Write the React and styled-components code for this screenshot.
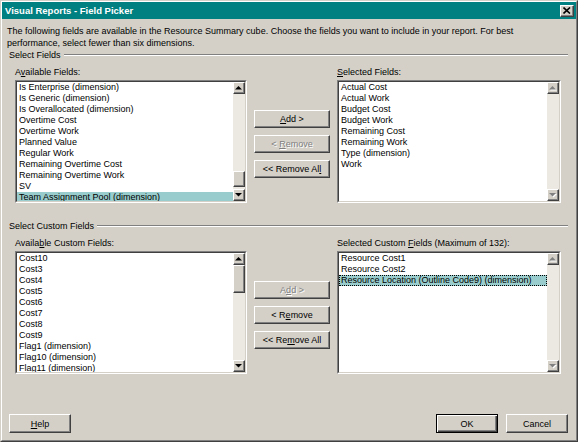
import React from 'react';
import styled, { createGlobalStyle, css } from 'styled-components';

const GlobalStyle = createGlobalStyle`
  html, body { margin: 0; padding: 0; background: #d4d0c8; }
  body {
    font-family: "Liberation Sans", Arial, sans-serif;
    font-size: 9px;
    color: #000;
  }
`;

const available = [
  'Is Enterprise (dimension)',
  'Is Generic (dimension)',
  'Is Overallocated (dimension)',
  'Overtime Cost',
  'Overtime Work',
  'Planned Value',
  'Regular Work',
  'Remaining Overtime Cost',
  'Remaining Overtime Work',
  'SV',
  'Team Assignment Pool (dimension)',
];

const selected = [
  'Actual Cost',
  'Actual Work',
  'Budget Cost',
  'Budget Work',
  'Remaining Cost',
  'Remaining Work',
  'Type (dimension)',
  'Work',
];

const customAvailable = [
  'Cost10', 'Cost3', 'Cost4', 'Cost5', 'Cost6', 'Cost7', 'Cost8', 'Cost9',
  'Flag1 (dimension)', 'Flag10 (dimension)', 'Flag11 (dimension)',
];

const customSelected = [
  'Resource Cost1',
  'Resource Cost2',
  'Resource Location (Outline Code9) (dimension)',
];

// underline the access key at position idx
const hotkey = (text, idx) => (
  <>
    {text.slice(0, idx)}
    <Key>{text[idx]}</Key>
    {text.slice(idx + 1)}
  </>
);

const Arrow = ({ dir, disabled }) => {
  const pts = dir === 'up' ? '0,3.5 3.5,0 7,3.5' : '0,0 3.5,3.5 7,0';
  return (
    <svg width="8" height="5" viewBox="0 0 8 5">
      {disabled && <polygon points={pts} fill="#fff" transform="translate(1,1)" />}
      <polygon points={pts} fill={disabled ? '#808080' : '#000'} />
    </svg>
  );
};

const ListBox = ({ items, selectedIndex, focused, thumb, disabledScroll }) => (
  <ListOuter>
    <ListInner>
      <Items>
        {items.map((it, i) => (
          <Item key={it} $selected={i === selectedIndex} $focused={focused && i === selectedIndex}>
            {it}
          </Item>
        ))}
      </Items>
      <Scrollbar>
        <ScrollButton><Arrow dir="up" disabled={disabledScroll} /></ScrollButton>
        <Track>
          {thumb && <Thumb $offset={thumb.offset} $size={thumb.size} />}
        </Track>
        <ScrollButton><Arrow dir="down" disabled={disabledScroll} /></ScrollButton>
      </Scrollbar>
    </ListInner>
  </ListOuter>
);

const App = () => (
  <>
    <GlobalStyle />
    <Window>
      <Frame>
        <TitleBar>
          <span>Visual Reports - Field Picker</span>
          <CloseBox>
            <svg width="8" height="7" viewBox="0 0 8 7">
              <path d="M0.5 0.5 L7 6.5 M7 0.5 L0.5 6.5" stroke="#000" strokeWidth="1.6" />
            </svg>
          </CloseBox>
        </TitleBar>

        <Body>
          <Description>
            The following fields are available in the Resource Summary cube. Choose the fields you want to include in your report. For best
            performance, select fewer than six dimensions.
          </Description>

          <GroupHeader>
            <span>Select Fields</span>
            <Etch />
          </GroupHeader>
          <Pane>
            <Label>{hotkey('Available Fields:', 1)}</Label>
            <Label $col={3}>{hotkey('Selected Fields:', 0)}</Label>
            <ListBox
              items={available}
              selectedIndex={10}
              thumb={{ offset: 77, size: 16 }}
            />
            <ButtonColumn>
              <Button>{hotkey('Add >', 0)}</Button>
              <Button disabled>{hotkey('< Remove', 2)}</Button>
              <Button>{hotkey('<< Remove All', 12)}</Button>
            </ButtonColumn>
            <ListBox items={selected} selectedIndex={-1} disabledScroll />
          </Pane>

          <GroupHeader $spaced>
            <span>Select Custom Fields</span>
            <Etch />
          </GroupHeader>
          <Pane>
            <Label>{hotkey('Available Custom Fields:', 6)}</Label>
            <Label $col={3}>{hotkey('Selected Custom Fields (Maximum of 132):', 16)}</Label>
            <ListBox
              items={customAvailable}
              selectedIndex={-1}
              thumb={{ offset: 0, size: 28 }}
            />
            <ButtonColumn>
              <Button disabled>{hotkey('Add >', 1)}</Button>
              <Button>{hotkey('< Remove', 3)}</Button>
              <Button>{hotkey('<< Remove All', 5)}</Button>
            </ButtonColumn>
            <ListBox items={customSelected} selectedIndex={2} focused disabledScroll />
          </Pane>

          <Footer>
            <Button $wide>{hotkey('Help', 0)}</Button>
            <FooterRight>
              <Button $wide $default>OK</Button>
              <Button $wide>Cancel</Button>
            </FooterRight>
          </Footer>
        </Body>
      </Frame>
    </Window>
  </>
);

const raised = css`
  box-sizing: border-box;
  background: #d4d0c8;
  border: 1px solid;
  border-color: #fff #404040 #404040 #fff;
  box-shadow: inset -1px -1px #808080;
`;

const Window = styled.div`
  box-sizing: border-box;
  width: 578px;
  height: 442px;
  display: flex;
  background: #d4d0c8;
  border: 1px solid;
  border-color: #d4d0c8 #404040 #404040 #d4d0c8;
`;

const Frame = styled.div`
  flex: 1;
  min-width: 0;
  display: flex;
  flex-direction: column;
  border: 1px solid;
  border-color: #fff #808080 #808080 #fff;
`;

const TitleBar = styled.div`
  height: 17px;
  background: #008080;
  color: #fff;
  font-weight: bold;
  font-size: 9.5px;
  display: flex;
  align-items: center;
  justify-content: space-between;
  padding: 0 2px 0 3px;
`;

const CloseBox = styled.div`
  ${raised};
  width: 14px;
  height: 12px;
  display: flex;
  align-items: center;
  justify-content: center;
`;

const Body = styled.div`
  flex: 1;
  display: flex;
  flex-direction: column;
  padding: 6px 8px 7px 5px;
`;

const Description = styled.p`
  margin: 0;
  line-height: 12px;
`;

const GroupHeader = styled.div`
  display: flex;
  align-items: center;
  height: 12px;
  padding-left: 2px;
  margin-top: ${(p) => (p.$spaced ? '17px' : '0')};
`;

const Etch = styled.div`
  flex: 1;
  margin-left: 3px;
  border-top: 1px solid #808080;
  border-bottom: 1px solid #fff;
`;

const Pane = styled.div`
  display: grid;
  grid-template-columns: 232px 76px 224px;
  grid-template-rows: 12px 123px;
  column-gap: 7px;
  row-gap: 2px;
  margin: 5px 0 0 8px;
`;

const Label = styled.div`
  grid-column: ${(p) => p.$col || 1};
  grid-row: 1;
  line-height: 12px;
  white-space: nowrap;
`;

const Key = styled.span`
  text-decoration: underline;
`;

const ListOuter = styled.div`
  grid-row: 2;
  box-sizing: border-box;
  border: 1px solid;
  border-color: #808080 #fff #fff #808080;
  display: flex;
  min-height: 0;
`;

const ListInner = styled.div`
  flex: 1;
  display: flex;
  min-width: 0;
  border: 1px solid;
  border-color: #404040 #d4d0c8 #d4d0c8 #404040;
  background: #fff;
`;

const Items = styled.div`
  flex: 1;
  min-width: 0;
  overflow: hidden;
`;

const Item = styled.div`
  box-sizing: border-box;
  height: 11px;
  line-height: 11px;
  padding: 0 2px;
  white-space: nowrap;
  background: ${(p) => (p.$selected ? '#99cccc' : 'transparent')};
  outline: ${(p) => (p.$focused ? '1px dotted #000' : 'none')};
  outline-offset: -1px;
`;

const Scrollbar = styled.div`
  width: 12px;
  display: flex;
  flex-direction: column;
  background: #ece9e3;
`;

const ScrollButton = styled.div`
  ${raised};
  width: 12px;
  height: 12px;
  display: flex;
  align-items: center;
  justify-content: center;
`;

const Track = styled.div`
  flex: 1;
  display: flex;
  flex-direction: column;
`;

const Thumb = styled.div`
  ${raised};
  margin-top: ${(p) => p.$offset}px;
  height: ${(p) => p.$size}px;
`;

const ButtonColumn = styled.div`
  grid-column: 2;
  grid-row: 2;
  display: flex;
  flex-direction: column;
  gap: 7px;
  padding-top: 30px;
`;

const Button = styled.button`
  ${raised};
  height: ${(p) => (p.$wide ? '19px' : '18px')};
  width: ${(p) => (p.$wide ? '62px' : '100%')};
  padding: 0;
  font-family: inherit;
  font-size: 9px;
  color: #000;
  cursor: default;

  &:disabled {
    color: #808080;
    text-shadow: 1px 1px #fff;
  }

  ${(p) =>
    p.$default &&
    css`
      border-color: #000;
      box-shadow: inset 1px 1px #fff, inset -1px -1px #404040, inset -2px -2px #808080;
    `}
`;

const Footer = styled.div`
  margin-top: auto;
  display: flex;
  justify-content: space-between;
  padding-left: 2px;
`;

const FooterRight = styled.div`
  display: flex;
  gap: 8px;
`;

export default App;
